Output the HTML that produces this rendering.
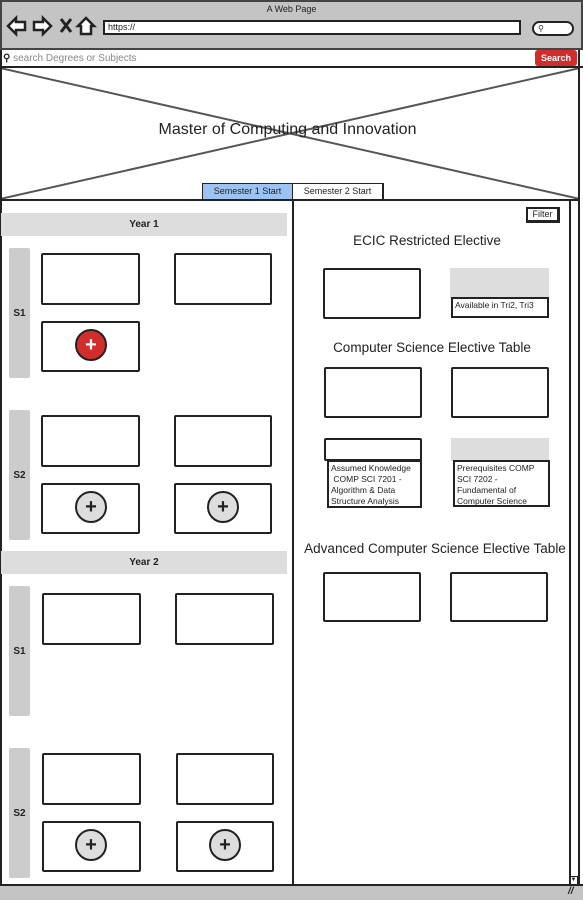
<!DOCTYPE html><html><head><style>
*{margin:0;padding:0;box-sizing:border-box}
body{width:583px;height:900px;position:relative;overflow:hidden;background:#fff;font-family:"Liberation Sans",sans-serif;color:#222}
.a{position:absolute}
.b{position:absolute;border:2px solid #222;background:#fff;border-radius:2px}
.g{position:absolute;background:#ddd}
.s{position:absolute;background:#ccc;border-radius:2px;font-size:10px;font-weight:bold;display:flex;align-items:center;justify-content:center}
.yr{position:absolute;background:#ddd;font-size:10px;font-weight:bold;display:flex;align-items:center;justify-content:center}
.c{position:absolute;width:32px;height:32px;border-radius:50%;border:2px solid #222;background:#ddd;display:flex;align-items:center;justify-content:center;font-size:20px;font-weight:bold;line-height:1}
.h{position:absolute;font-size:13.5px;text-align:center;white-space:nowrap}
.t{position:absolute;font-size:8.5px;line-height:11px;padding:1px 2px;border:2px solid #222;background:#fff}
</style></head><body>
<div class="a" style="left:0;top:0;width:583px;height:50px;background:#c4c4c4;border:2px solid #444"></div>
<div class="a" style="left:0;top:4px;width:583px;text-align:center;font-size:9px">A Web Page</div>
<svg class="a" style="left:6px;top:15px" width="92" height="22" viewBox="0 0 92 22" fill="#fff" stroke="#222" stroke-width="2.5">
<path d="M2 11 L10 3 L10 7 L19 7 L19 15 L10 15 L10 19 Z"/>
<path d="M45 11 L37 3 L37 7 L28 7 L28 15 L37 15 L37 19 Z"/>
<path d="M55 4 L65 17 M65 4 L55 17" stroke-width="3"/>
<path d="M72 11 L80 3 L88 11 L85 11 L85 19 L75 19 L75 11 Z"/>
</svg>
<div class="a" style="left:103px;top:20px;width:418px;height:15px;background:#fff;border:2px solid #222;font-size:9px;padding-left:3px;line-height:11px">https://</div>
<div class="a" style="left:532px;top:21px;width:42px;height:15px;background:#fff;border:2px solid #222;border-radius:8px;font-size:8px;padding-left:4px;line-height:11px">&#9906;</div>
<div class="a" style="left:0;top:50px;width:583px;height:18px;background:#fff;border-bottom:2px solid #222"></div>
<div class="a" style="left:3px;top:53px;font-size:10px;color:#888"><b style="color:#222">&#9906;</b> search Degrees or Subjects</div>
<div class="a" style="left:535px;top:50px;width:42px;height:16px;background:#d22d2d;color:#fff;font-size:9px;font-weight:bold;text-align:center;line-height:16px;border-radius:3px">Search</div>
<svg class="a" style="left:0;top:68px" width="583" height="132"><path d="M0 0 L580 131 M580 0 L0 131" stroke="#555" stroke-width="2"/></svg>
<div class="a" style="left:0;top:121px;width:575px;text-align:center;font-size:16px">Master of Computing and Innovation</div>
<div class="a" style="left:202px;top:183px;width:91px;height:17px;background:#9dc3f2;border:1px solid #222;font-size:9px;text-align:center;line-height:15px">Semester 1 Start</div>
<div class="a" style="left:292px;top:183px;width:92px;height:17px;background:#fff;border:1px solid #222;border-right:2px solid #222;font-size:9px;text-align:center;line-height:15px">Semester 2 Start</div>
<div class="a" style="left:0;top:199px;width:580px;height:2px;background:#222"></div>
<div class="a" style="left:0;top:50px;width:2px;height:836px;background:#222"></div>
<div class="a" style="left:578px;top:50px;width:2px;height:836px;background:#222"></div>
<div class="a" style="left:292px;top:201px;width:1.5px;height:684px;background:#222"></div>
<div class="a" style="left:569px;top:201px;width:1.5px;height:684px;background:#222"></div>
<div class="a" style="left:569px;top:876px;width:9px;height:9px;border:1px solid #222;font-size:6px;text-align:center;line-height:7px">&#9660;</div>
<div class="a" style="left:0;top:884px;width:583px;height:16px;background:#c4c4c4;border-top:2px solid #222"></div>
<div class="a" style="left:568px;top:886px;font-size:10px;font-weight:bold;font-style:italic">//</div>

<div class="yr" style="left:1px;top:213px;width:286px;height:23px">Year 1</div>
<div class="s" style="left:9px;top:248px;width:21px;height:130px">S1</div>
<div class="b" style="left:41px;top:253px;width:99px;height:52px"></div>
<div class="b" style="left:174px;top:253px;width:98px;height:52px"></div>
<div class="b" style="left:41px;top:321px;width:99px;height:51px"></div>
<div class="c" style="left:75px;top:329px;background:#d22d2d;color:#fff">+</div>
<div class="s" style="left:9px;top:410px;width:21px;height:130px">S2</div>
<div class="b" style="left:41px;top:415px;width:99px;height:52px"></div>
<div class="b" style="left:174px;top:415px;width:98px;height:52px"></div>
<div class="b" style="left:41px;top:483px;width:99px;height:51px"></div>
<div class="c" style="left:75px;top:491px">+</div>
<div class="b" style="left:174px;top:483px;width:98px;height:51px"></div>
<div class="c" style="left:207px;top:491px">+</div>

<div class="yr" style="left:1px;top:551px;width:286px;height:23px">Year 2</div>
<div class="s" style="left:9px;top:586px;width:21px;height:130px">S1</div>
<div class="b" style="left:42px;top:593px;width:99px;height:52px"></div>
<div class="b" style="left:175px;top:593px;width:99px;height:52px"></div>
<div class="s" style="left:9px;top:748px;width:21px;height:130px">S2</div>
<div class="b" style="left:42px;top:753px;width:99px;height:52px"></div>
<div class="b" style="left:176px;top:753px;width:98px;height:52px"></div>
<div class="b" style="left:42px;top:821px;width:99px;height:51px"></div>
<div class="c" style="left:75px;top:829px">+</div>
<div class="b" style="left:176px;top:821px;width:98px;height:51px"></div>
<div class="c" style="left:209px;top:829px">+</div>

<div class="a" style="left:526px;top:207px;width:34px;height:16px;border:2px solid #222;border-right-width:3px;border-bottom-width:3px;font-size:9px;text-align:center;line-height:11px">Filter</div>
<div class="h" style="left:300px;top:233px;width:254px">ECIC Restricted Elective</div>
<div class="b" style="left:323px;top:268px;width:98px;height:51px"></div>
<div class="g" style="left:450px;top:268px;width:99px;height:30px"></div>
<div class="t" style="left:451px;top:297px;width:98px;height:21px">Available in Tri2, Tri3</div>
<div class="h" style="left:300px;top:340px;width:264px">Computer Science Elective Table</div>
<div class="b" style="left:324px;top:367px;width:98px;height:51px"></div>
<div class="b" style="left:451px;top:367px;width:98px;height:51px"></div>
<div class="b" style="left:324px;top:438px;width:98px;height:23px"></div>
<div class="t" style="left:327px;top:460px;width:95px;height:48px">Assumed Knowledge<br>&nbsp;COMP SCI 7201 -<br>Algorithm &amp; Data<br>Structure Analysis</div>
<div class="g" style="left:451px;top:438px;width:98px;height:23px"></div>
<div class="t" style="left:453px;top:460px;width:97px;height:47px">Prerequisites COMP<br>SCI 7202 -<br>Fundamental of<br>Computer Science</div>
<div class="h" style="left:298px;top:541px;width:274px">Advanced Computer Science Elective Table</div>
<div class="b" style="left:323px;top:572px;width:98px;height:50px"></div>
<div class="b" style="left:450px;top:572px;width:98px;height:50px"></div>
</body></html>
